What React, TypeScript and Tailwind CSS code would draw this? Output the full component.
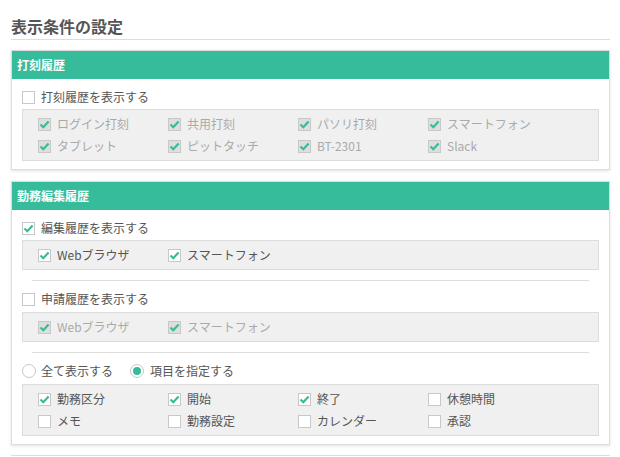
const GREEN = "#37bc9b";

function Check({ checked, disabled }: { checked: boolean; disabled?: boolean }) {
  return (
    <span
      className={
        "flex h-[13px] w-[13px] shrink-0 items-center justify-center border " +
        (disabled ? "border-[#c8c8c8] bg-[#dedede]" : "border-[#c8c8c8] bg-white")
      }
    >
      {checked && (
        <svg width="11" height="11" viewBox="0 0 11 11">
          <path d="M1.5 5.5 L4.3 8.2 L9.6 2.4" fill="none" stroke={GREEN} strokeWidth="2.2" />
        </svg>
      )}
    </span>
  );
}

function Radio({ on }: { on: boolean }) {
  return (
    <span className="flex h-[14px] w-[14px] shrink-0 items-center justify-center rounded-full border border-[#c8c8c8] bg-white">
      {on && <span className="h-[8px] w-[8px] rounded-full bg-[#37bc9b]" />}
    </span>
  );
}

function Item({ label, checked, disabled }: { label: string; checked: boolean; disabled?: boolean }) {
  return (
    <div className="flex h-[22px] w-[130px] items-center gap-[6px]">
      <Check checked={checked} disabled={disabled} />
      <span className={disabled ? "text-[#aaaaaa]" : "text-[#555555]"}>{label}</span>
    </div>
  );
}

function Box({ rows, disabled }: { rows: [string, boolean][][]; disabled?: boolean }) {
  return (
    <div className="border border-[#dcdcdc] bg-[#f0f0f0] py-[3px] pl-[15px]">
      {rows.map((r, i) => (
        <div key={i} className="flex">
          {r.map(([l, c]) => (
            <Item key={l} label={l} checked={c} disabled={disabled} />
          ))}
        </div>
      ))}
    </div>
  );
}

function Toggle({ label, checked }: { label: string; checked: boolean }) {
  return (
    <div className="flex h-[20px] items-center gap-[6px]">
      <Check checked={checked} />
      <span className="text-[#555555]">{label}</span>
    </div>
  );
}

function Card({ title, children }: { title: string; children: React.ReactNode }) {
  return (
    <div className="border border-[#dddddd] bg-white shadow-[0_1px_3px_rgba(0,0,0,0.12)]">
      <div className="flex h-[28px] items-center bg-[#37bc9b] px-[5px] text-[12px] font-bold text-white">
        {title}
      </div>
      <div className="px-[10px] pt-[8px] pb-[8px]">{children}</div>
    </div>
  );
}

export default function App() {
  return (
    <main
      className="min-h-screen bg-white px-[11px] text-[12px] text-[#555555] w-[621px]"
      style={{ fontFamily: '"Noto Sans CJK JP", "Noto Sans", sans-serif' }}
    >
      <h1 className="border-b border-[#dddddd] pt-[13px] text-[16px] font-bold leading-[26px] text-[#555555]">
        表示条件の設定
      </h1>

      <div className="mt-[10px]">
        <Card title="打刻履歴">
          <Toggle label="打刻履歴を表示する" checked={false} />
          <div className="mt-[2px]">
            <Box
              disabled
              rows={[
                [["ログイン打刻", true], ["共用打刻", true], ["パソリ打刻", true], ["スマートフォン", true]],
                [["タブレット", true], ["ピットタッチ", true], ["BT-2301", true], ["Slack", true]],
              ]}
            />
          </div>
        </Card>
      </div>

      <div className="mt-[11px]">
        <Card title="勤務編集履歴">
          <Toggle label="編集履歴を表示する" checked />
          <div className="mt-[2px]">
            <Box rows={[[["Webブラウザ", true], ["スマートフォン", true]]]} />
          </div>
          <div className="mx-[10px] mt-[10px] mb-[8px] border-t border-[#dddddd]" />
          <Toggle label="申請履歴を表示する" checked={false} />
          <div className="mt-[3px]">
            <Box disabled rows={[[["Webブラウザ", true], ["スマートフォン", true]]]} />
          </div>
          <div className="mx-[10px] mt-[10px] mb-[8px] border-t border-[#dddddd]" />
          <div className="flex h-[20px] items-center">
            <Radio on={false} />
            <span className="ml-[5px] text-[#555555]">全て表示する</span>
            <span className="ml-[17px]">
              <Radio on />
            </span>
            <span className="ml-[6px] text-[#555555]">項目を指定する</span>
          </div>
          <div className="mt-[3px]">
            <Box
              rows={[
                [["勤務区分", true], ["開始", true], ["終了", true], ["休憩時間", false]],
                [["メモ", false], ["勤務設定", false], ["カレンダー", false], ["承認", false]],
              ]}
            />
          </div>
        </Card>
      </div>

      <div className="mt-[10px] border-t border-[#dddddd]" />
    </main>
  );
}
